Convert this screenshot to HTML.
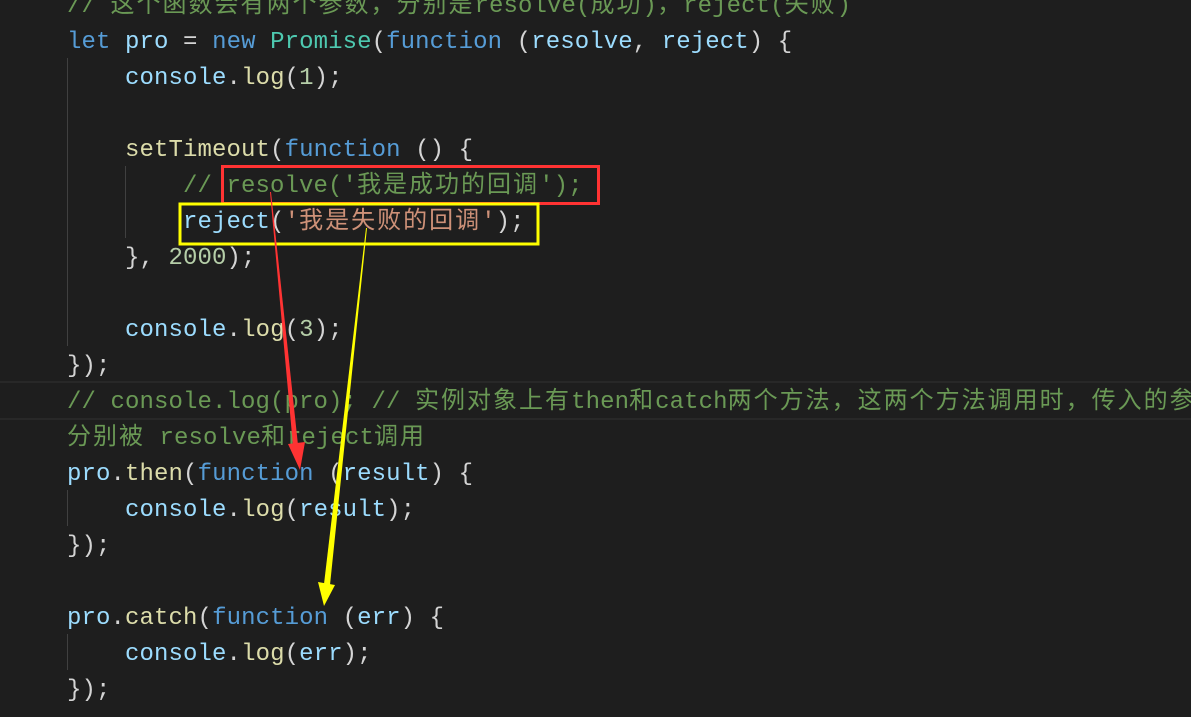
<!DOCTYPE html>
<html><head><meta charset="utf-8"><style>
html,body{margin:0;padding:0;background:#1e1e1e;width:1191px;height:717px;overflow:hidden;}
.code{position:absolute;left:67px;top:-11px;font-family:"Liberation Mono","Noto Sans CJK SC",monospace;font-size:24px;line-height:36px;white-space:pre;color:#d4d4d4;letter-spacing:0.1px;}
.k{color:#569cd6}.v{color:#9cdcfe}.f{color:#dcdcaa}.c{color:#4ec9b0}.s{color:#ce9178}.m{color:#6a9955}.n{color:#b5cea8}
.cj{letter-spacing:2px}
.hl{position:absolute;left:0;top:381px;width:1191px;height:35px;border-top:2px solid #282828;border-bottom:2px solid #282828;}
.g{position:absolute;width:1px;background:#404040;}
</style></head><body>
<div class="hl"></div>
<div class="g" style="left:67px;top:58px;height:288px"></div>
<div class="g" style="left:125px;top:166px;height:72px"></div>
<div class="g" style="left:67px;top:490px;height:36px"></div>
<div class="g" style="left:67px;top:634px;height:36px"></div>
<div class="code"><span class="m">// <span class="cj">这个函数会有两个参数，分别是</span>resolve(<span class="cj">成功</span>)<span class="cj">，</span>reject(<span class="cj">失败</span>)</span>
<span class="k">let</span> <span class="v">pro</span> = <span class="k">new</span> <span class="c">Promise</span>(<span class="k">function</span> (<span class="v">resolve</span>, <span class="v">reject</span>) {
    <span class="v">console</span>.<span class="f">log</span>(<span class="n">1</span>);

    <span class="f">setTimeout</span>(<span class="k">function</span> () {
        <span class="m">// resolve('<span class="cj">我是成功的回调</span>');</span>
        <span class="v">reject</span>(<span class="s">'<span class="cj">我是失败的回调</span>'</span>);
    }, <span class="n">2000</span>);

    <span class="v">console</span>.<span class="f">log</span>(<span class="n">3</span>);
});
<span class="m">// console.log(pro); // <span class="cj">实例对象上有</span>then<span class="cj">和</span>catch<span class="cj">两个方法，这两个方法调用时，传入的参</span></span>
<span class="m"><span class="cj">分别被</span> resolve<span class="cj">和</span>reject<span class="cj">调用</span></span>
<span class="v">pro</span>.<span class="f">then</span>(<span class="k">function</span> (<span class="v">result</span>) {
    <span class="v">console</span>.<span class="f">log</span>(<span class="v">result</span>);
});

<span class="v">pro</span>.<span class="f">catch</span>(<span class="k">function</span> (<span class="v">err</span>) {
    <span class="v">console</span>.<span class="f">log</span>(<span class="v">err</span>);
});</div>
<svg width="1191" height="717" style="position:absolute;left:0;top:0">
<rect x="222.5" y="166.5" width="376" height="37" fill="none" stroke="#ff3333" stroke-width="3"/>
<rect x="180" y="204" width="358" height="40" fill="none" stroke="#ffff00" stroke-width="3"/>
<polygon points="270,192 271,192 298,445 293,446" fill="#ff3333"/>
<polygon points="288,444 305,442 300,470" fill="#ff3333"/>
<polygon points="366,228 367,228 330,585 324,584" fill="#ffff00"/>
<polygon points="318,582 335,585 324,606" fill="#ffff00"/>
</svg>
</body></html>
